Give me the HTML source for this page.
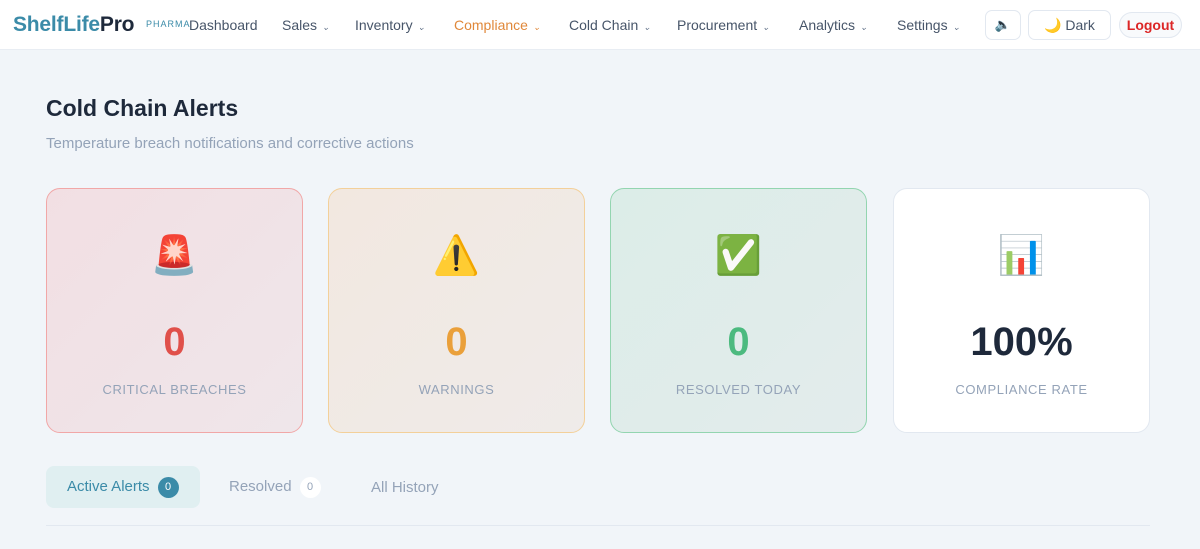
<!DOCTYPE html>
<html><head><meta charset="utf-8"><style>
*{box-sizing:border-box;margin:0;padding:0}
body{width:1200px;height:549px;overflow:hidden;background:#f1f5f9;font-family:"Liberation Sans",sans-serif;color:#1e293b;position:relative}
.nav{position:absolute;left:0;top:0;width:1200px;height:50px;background:#fff;border-bottom:1px solid #e8edf3}
.nav span{position:absolute;top:17px;font-size:14px;color:#475569;white-space:nowrap}
.logo{position:absolute;left:13px;top:13px;font-size:21px;font-weight:bold;letter-spacing:-0.2px;color:#3b8ba8}
.logo b{color:#1e293b}
.ph{position:absolute;left:146px;top:19px;font-size:9px;letter-spacing:1px;color:#3b8ba8}
.car{font-size:9px;margin-left:5px;color:#64748b}
.btn{position:absolute;top:10px;height:30px;border:1px solid #e2e8f0;border-radius:7px;background:#fff}
h1{position:absolute;left:46px;top:95px;font-size:23px;font-weight:bold;color:#1e293b}
.sub{position:absolute;left:46px;top:135px;font-size:15px;color:#94a3b8}
.card{position:absolute;top:188px;width:257px;height:245px;border-radius:14px;border:1px solid;text-align:center}
.ic{position:absolute;top:45px;left:0;width:100%;font-size:38px;line-height:44px}
.n{position:absolute;width:100%;font-size:40px;font-weight:bold;top:131px;left:0}
.l{position:absolute;top:193px;left:0;width:100%;font-size:13px;letter-spacing:0.6px;color:#94a3b8}
.tab{position:absolute;top:466px;height:42px;font-size:15px;line-height:42px}
.bd{display:inline-block;width:21px;height:21px;border-radius:50%;font-size:11px;line-height:21px;text-align:center;vertical-align:middle;margin-left:8px}
</style></head><body>
<div class="nav">
<div class="logo">ShelfLife<b>Pro</b></div>
<div class="ph">PHARMA</div>
<span style="left:189px;color:#475569">Dashboard</span>
<span style="left:282px">Sales<i class="car">⌄</i></span>
<span style="left:355px">Inventory<i class="car">⌄</i></span>
<span style="left:454px;color:#e0883a">Compliance<i class="car" style="color:#e0883a">⌄</i></span>
<span style="left:569px">Cold Chain<i class="car">⌄</i></span>
<span style="left:677px">Procurement<i class="car">⌄</i></span>
<span style="left:799px">Analytics<i class="car">⌄</i></span>
<span style="left:897px">Settings<i class="car">⌄</i></span>
<div class="btn" style="left:985px;width:36px;text-align:center;line-height:28px;font-size:13px">🔈</div>
<div class="btn" style="left:1028px;width:83px;font-size:14px;line-height:28px;color:#475569;text-align:center">🌙 Dark</div>
<div class="btn" style="left:1119px;width:63px;top:12px;height:26px;border-radius:13px;background:#f8fafc;color:#dc2626;font-weight:bold;font-size:14px;line-height:24px;text-align:center">Logout</div>
</div>
<h1>Cold Chain Alerts</h1>
<div class="sub">Temperature breach notifications and corrective actions</div>
<div class="card" style="left:46px;background:linear-gradient(135deg,#f2dfe3,#efe6ea);border-color:#f1a7a7"><div class="ic">🚨</div><div class="n" style="color:#e0504a">0</div><div class="l">CRITICAL BREACHES</div></div>
<div class="card" style="left:328px;background:linear-gradient(135deg,#f2e8e0,#efebe9);border-color:#f3d09a"><div class="ic">⚠️</div><div class="n" style="color:#eaa03a">0</div><div class="l">WARNINGS</div></div>
<div class="card" style="left:610px;background:linear-gradient(135deg,#dcede8,#e3ecec);border-color:#93d5b0"><div class="ic">✅</div><div class="n" style="color:#4cba7f">0</div><div class="l">RESOLVED TODAY</div></div>
<div class="card" style="left:893px;background:#fff;border-color:#e2e8f0"><div class="ic">📊</div><div class="n" style="color:#1e293b">100%</div><div class="l">COMPLIANCE RATE</div></div>
<div class="tab" style="left:46px;width:154px;background:#e0eff1;border-radius:8px;color:#3b8ba8;padding-left:21px">Active Alerts<span class="bd" style="background:#3b8ba8;color:#fff">0</span></div>
<div class="tab" style="left:229px;color:#94a3b8">Resolved<span class="bd" style="background:#fff;color:#94a3b8">0</span></div>
<div class="tab" style="left:371px;color:#94a3b8;top:467px">All History</div>
<div style="position:absolute;left:46px;top:525px;width:1104px;height:1px;background:#e2e8f0"></div>
</body></html>
